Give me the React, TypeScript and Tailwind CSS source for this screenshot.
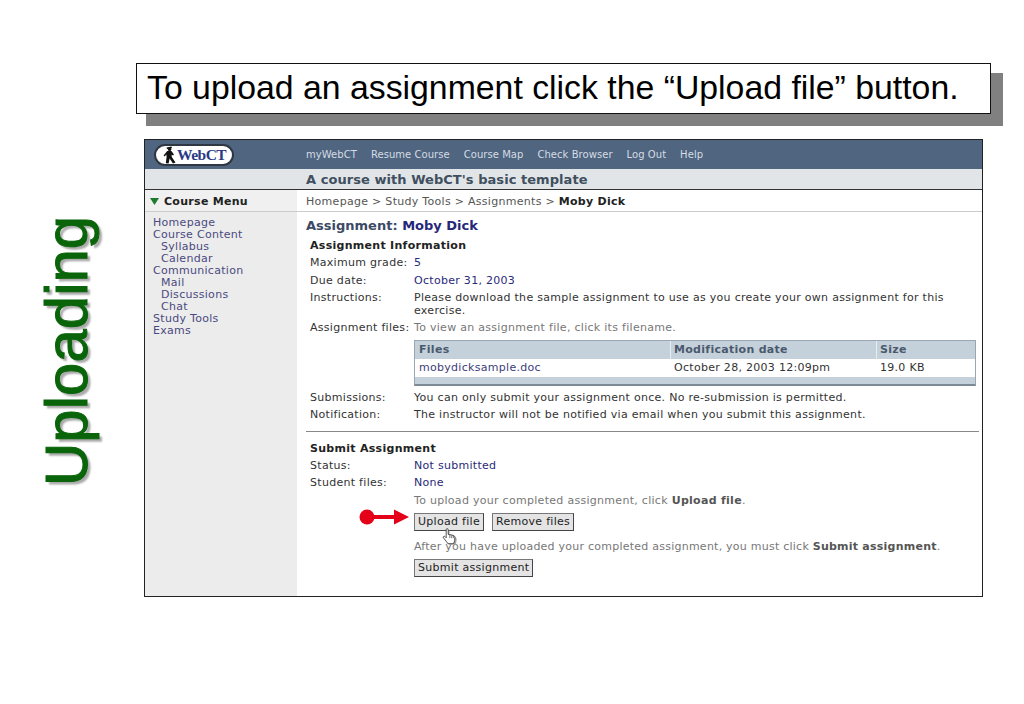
import React from 'react'

const Row = ({ label, children }: { label: string; children: React.ReactNode }) => (
  <div className="flex items-center h-[17.5px]">
    <div className="w-[104px] shrink-0 text-[#333]">{label}</div>
    <div>{children}</div>
  </div>
)

const Logo = () => (
  <div className="w-[80px] h-[22px] rounded-full bg-white border-2 border-[#2f3742] flex items-center pl-[7px]">
    <svg width="14" height="18" viewBox="0 0 14 18" className="shrink-0">
      <path d="M3.5 1.5 L8.5 0.5 L9 2.2 L4 3 Z" fill="#111" />
      <circle cx="6.6" cy="3.4" r="1.7" fill="#111" />
      <path d="M4.2 5 L8.4 5 L11 8.5 L9.8 9.6 L8.6 8.4 L8.8 11 L12.5 16.6 L10 17.4 L6.6 12.6 L5.6 17.4 L2.8 17.2 L3.6 11 L3.4 8.4 L1.6 10.6 L0.6 9.6 Z" fill="#111" />
    </svg>
    <span className="font-['Liberation_Serif',serif] font-bold text-[15.5px] leading-none text-[#2a3a86] tracking-[-0.5px]">WebCT</span>
  </div>
)

const Arrow = () => (
  <svg width="50" height="16" viewBox="0 0 50 16" className="absolute left-[-55px] top-[-4px]">
    <circle cx="8" cy="8" r="7.5" fill="#e5001a" />
    <rect x="8" y="6" width="28" height="4" fill="#e5001a" />
    <path d="M35 0.5 L50 8 L35 15.5 Z" fill="#e5001a" />
  </svg>
)

const HandCursor = () => (
  <svg width="18" height="17" viewBox="0 0 18 20" className="absolute left-[27px] top-[15px]">
    <path d="M6.5 3 L8.5 3 L8.5 9 L15.5 10.5 L17 13 L16 19.5 L8 19.5 L3 13 L6.5 13 Z" fill="#aaa" />
    <path
      d="M4.5 2 Q4.5 0.8 5.7 0.8 Q6.9 0.8 6.9 2 L6.9 7.5 L8.8 7.8 L11 8.2 L13.5 9 Q14.8 9.5 14.8 11 L14.5 15 L13.2 18.5 L6.5 18.5 L4.5 15.5 L1.2 11.5 Q0.6 10.3 1.6 9.8 Q2.6 9.4 3.4 10.4 L4.5 11.5 Z"
      fill="#fff"
      stroke="#333"
      strokeWidth="1"
    />
    <path d="M8.8 8 L8.8 12 M11 8.4 L11 12 M13 9 L13 12" stroke="#333" strokeWidth="0.8" fill="none" />
  </svg>
)

const Btn = ({ children, h = 'h-[17.5px]' }: { children: React.ReactNode; h?: string }) => (
  <button className={`${h} px-[3px] bg-[#e4e4e4] border border-[#777] border-r-[#444] border-b-[#444] text-[#222] leading-none tracking-[0.29px]`}>
    {children}
  </button>
)

const menu: [string, boolean][] = [
  ['Homepage', false],
  ['Course Content', false],
  ['Syllabus', true],
  ['Calendar', true],
  ['Communication', false],
  ['Mail', true],
  ['Discussions', true],
  ['Chat', true],
  ['Study Tools', false],
  ['Exams', false],
]

export default function App() {
  return (
    <div className="relative w-[1024px] h-[704px] bg-white overflow-hidden font-['DejaVu_Sans',sans-serif] pt-[63px]">
      <div className="ml-[136px] w-[855px] h-[51px] border border-[#111] bg-white shadow-[11px_11px_0_1px_#808080] flex items-center pl-[10px] pb-px font-['Liberation_Sans',sans-serif] text-[33.8px] text-black leading-none relative z-10">
        To upload an assignment click the “Upload file” button.
      </div>

      <div className="flex mt-[25px]">
        <div className="w-[144px] shrink-0 flex justify-start pl-[31px] pt-[75px]">
          <div className="[writing-mode:vertical-rl] rotate-180 font-['Liberation_Sans',sans-serif] text-[60px] leading-[72px] h-[272px] text-[#0a640a] [-webkit-text-stroke:1px_#0a640a] [text-shadow:-3px_3px_2px_#aaa]">
            Uploading
          </div>
        </div>

        <div className="w-[839px] h-[458px] border border-[#222] flex flex-col text-[11px] leading-none tracking-[0.29px]">
          <div className="h-[29px] shrink-0 bg-[#4f6580] flex items-center pl-[9px]">
            <Logo />
            <div className="ml-[72px] flex gap-[14px] text-[#d5dce4] text-[10px] tracking-[0.05px]">
              <span>myWebCT</span>
              <span>Resume Course</span>
              <span>Course Map</span>
              <span>Check Browser</span>
              <span>Log Out</span>
              <span>Help</span>
            </div>
          </div>
          <div className="h-[21px] shrink-0 bg-[#e1e5e7] border-b border-[#333] flex items-center pl-[161px] font-bold text-[13px] tracking-[0.05px] text-[#3f4f60]">
            A course with WebCT's basic template
          </div>

          <div className="flex-1 flex min-h-0">
            <div className="w-[152px] shrink-0 bg-[#ececec] flex flex-col">
              <div className="h-[22px] shrink-0 border-b border-[#ccc] flex items-center pl-[5px] pt-px font-bold text-[#222] bg-[#f0f0f0]">
                <svg width="9" height="7" viewBox="0 0 9 7" className="mr-[5px]">
                  <path d="M0 0 H9 L4.5 7 Z" fill="#1e7a2e" />
                </svg>
                Course Menu
              </div>
              <div className="pt-[4px] pl-[8px] text-[#4a4a80]">
                {menu.map(([name, sub]) => (
                  <div key={name} className={`h-[12.1px] flex items-center ${sub ? 'pl-[8px]' : ''}`}>
                    {name}
                  </div>
                ))}
              </div>
            </div>

            <div className="flex-1 min-w-0 flex flex-col">
              <div className="h-[22px] shrink-0 border-b border-[#ccc] flex items-center pl-[9px] pt-px text-[#555]">
                Homepage &gt; Study Tools &gt; Assignments &gt;&nbsp;<b className="text-[#222]">Moby Dick</b>
              </div>
              <div className="flex-1 pl-[13px] text-[#333]">
                <div className="-ml-[4px] h-[27px] flex items-center font-bold text-[13px] tracking-normal text-[#3c4a66]">
                  Assignment:&nbsp;<span className="text-[#26267a]">Moby Dick</span>
                </div>
                <div className="h-[13px] flex items-center font-bold text-[#222]">Assignment Information</div>
                <div className="mt-[2px]">
                  <Row label="Maximum grade:">
                    <span className="text-[#2a2a7a]">5</span>
                  </Row>
                  <Row label="Due date:">
                    <span className="text-[#2a2a7a]">October 31, 2003</span>
                  </Row>
                  <div className="flex h-[30px] pt-[2px]">
                    <div className="w-[104px] shrink-0 leading-[13px]">Instructions:</div>
                    <div className="leading-[13px] w-[555px]">
                      Please download the sample assignment to use as you create your own assignment for this exercise.
                    </div>
                  </div>
                  <Row label="Assignment files:">
                    <span className="text-[#777]">To view an assignment file, click its filename.</span>
                  </Row>
                </div>

                <div className="ml-[104px] mt-[3px] w-[562px] h-[46px] border border-[#9aa7b3] border-b-2 border-b-[#7d8a96] bg-[#c5d1da] flex flex-col">
                  <div className="h-[18px] shrink-0 flex items-center font-bold text-[#4a5a6e]">
                    <div className="w-[256px] pl-[4px] border-r border-white/60 h-full flex items-center">Files</div>
                    <div className="w-[206px] pl-[3px] border-r border-white/60 h-full flex items-center">Modification date</div>
                    <div className="pl-[3px]">Size</div>
                  </div>
                  <div className="h-[18px] shrink-0 bg-white flex items-center text-[#333]">
                    <div className="w-[256px] pl-[4px] text-[#3d3d7a]">mobydicksample.doc</div>
                    <div className="w-[206px] pl-[3px]">October 28, 2003 12:09pm</div>
                    <div className="pl-[3px]">19.0 KB</div>
                  </div>
                </div>

                <div className="mt-[3px]">
                  <Row label="Submissions:">You can only submit your assignment once. No re-submission is permitted.</Row>
                  <Row label="Notification:">The instructor will not be notified via email when you submit this assignment.</Row>
                </div>

                <div className="mt-[7px] -ml-[4px] mr-[3px] border-t border-[#888]" />

                <div className="h-[13px] mt-[10px] flex items-center font-bold text-[#222]">Submit Assignment</div>
                <div className="mt-[2px]">
                  <Row label="Status:">
                    <span className="text-[#2a2a7a]">Not submitted</span>
                  </Row>
                  <Row label="Student files:">
                    <span className="text-[#2a2a7a]">None</span>
                  </Row>
                </div>
                <div className="ml-[104px]">
                  <div className="h-[17px] flex items-center text-[#777]">
                    To upload your completed assignment, click&nbsp;<b className="text-[#555]">Upload file</b>.
                  </div>
                  <div className="relative mt-[4.5px] flex gap-[8px]">
                    <Arrow />
                    <Btn>Upload file</Btn>
                    <Btn>Remove files</Btn>
                    <HandCursor />
                  </div>
                  <div className="h-[17px] mt-[7px] flex items-center text-[#777] tracking-[0.24px]">
                    After you have uploaded your completed assignment, you must click&nbsp;
                    <b className="text-[#555]">Submit assignment</b>.
                  </div>
                  <div className="mt-[4px]">
                    <Btn h="h-[18px]">Submit assignment</Btn>
                  </div>
                </div>
              </div>
            </div>
          </div>
        </div>
      </div>
    </div>
  )
}
